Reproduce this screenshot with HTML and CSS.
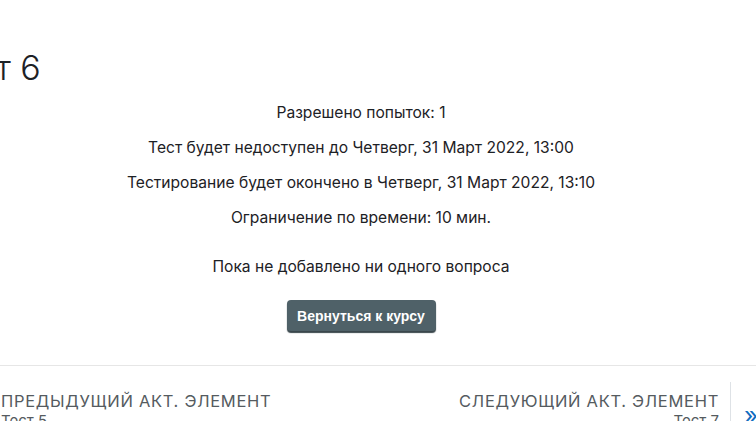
FILE: index.html
```html
<!DOCTYPE html>
<html lang="ru">
<head>
<meta charset="utf-8">
<link rel="stylesheet" href="styles.css">
</head>
<body>
<div class="page">
  <h2 class="title">Тест 6</h2>
  <div class="info">
    <p>Разрешено попыток: 1</p>
    <p>Тест будет недоступен до Четверг, 31 Март 2022, 13:00</p>
    <p>Тестирование будет окончено в Четверг, 31 Март 2022, 13:10</p>
    <p>Ограничение по времени: 10 мин.</p>
    <p class="empty">Пока не добавлено ни одного вопроса</p>
    <div class="actions"><button class="btn">Вернуться к курсу</button></div>
  </div>
  <nav class="nav">
    <a class="nav-link prev" href="#">
      <span class="arrow">«</span>
      <span class="nav-text">
        <span class="nav-label">Предыдущий акт. элемент</span>
        <span class="nav-name">Тест 5</span>
      </span>
    </a>
    <a class="nav-link next" href="#">
      <span class="nav-text">
        <span class="nav-label">Следующий акт. элемент</span>
        <span class="nav-name">Тест 7</span>
      </span>
      <span class="arrow">»</span>
    </a>
  </nav>
</div>
</body>
</html>
```
FILE: styles.css
```css
html, body {
  margin: 0;
  padding: 0;
  background: #fff;
  overflow: hidden;
}
body {
  font-family: Inter, "Noto Sans", sans-serif;
  color: #1d2125;
  width: 756px;
  height: 421px;
}
.page {
  width: 800px;
  margin-left: -39px;
}
.title {
  margin: 0;
  padding: 46px 0 0 0;
  margin-left: -23px;
  font-size: 34px;
  font-weight: 300;
  line-height: 44px;
  height: 44px;
}
.info {
  text-align: center;
  font-size: 15.6px;
  padding-top: 12px;
}
.info p {
  margin: 0 0 13px 0;
  line-height: 22px;
}
.info p.empty {
  margin-top: 27px;
  margin-bottom: 22px;
}
.actions {
  display: flex;
  justify-content: center;
}
.btn {
  background: #4f6168;
  color: #fff;
  border: none;
  border-radius: 4px;
  box-shadow: 0 2px 1px #3a474c;
  font-family: "Liberation Sans", Arial, sans-serif;
  font-weight: bold;
  font-size: 14px;
  white-space: nowrap;
  height: 31px;
  width: 149px;
  padding: 0;
}
.nav {
  margin-top: 34px;
  border-top: 1px solid #e6e6e6;
  display: flex;
  justify-content: space-between;
  padding-top: 16px;
}
.nav-link {
  display: flex;
  text-decoration: none;
  align-items: stretch;
}
.arrow {
  color: #0f6cbf;
  font-size: 24px;
  line-height: 1;
  padding-top: 22px;
  width: 30px;
}
.prev .arrow {
  border-right: 1px solid #dee2e6;
  text-align: left;
}
.next .arrow {
  border-left: 1px solid #dee2e6;
  text-align: left;
  padding-left: 13px;
  width: 17px;
}
.nav-text {
  display: flex;
  flex-direction: column;
}
.prev .nav-text { padding-left: 9px; align-items: flex-start; }
.next .nav-text { padding-right: 11px; align-items: flex-end; }
.nav-label {
  text-transform: uppercase;
  letter-spacing: 0.7px;
  font-size: 16.5px;
  line-height: 22px;
  padding-top: 8px;
  color: #555b60;
}
.nav-name {
  font-size: 15px;
  line-height: 18px;
  color: #555b60;
}
```
